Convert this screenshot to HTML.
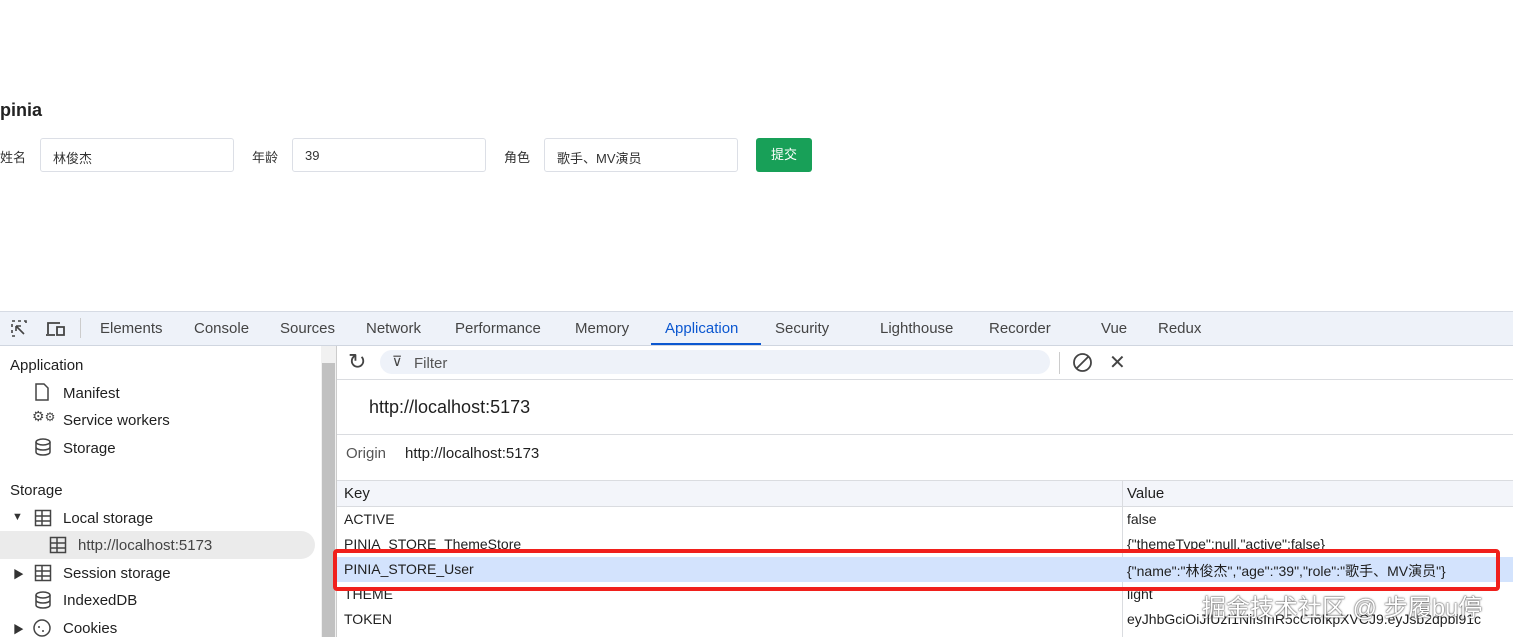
<!DOCTYPE html><html><head><meta charset="utf-8"><style>
*{box-sizing:border-box;margin:0;padding:0}
body{width:1513px;height:637px;overflow:hidden;background:#fff;font-family:"Liberation Sans","Noto Sans CJK SC",sans-serif;position:relative;color:#1f1f1f}
.a{position:absolute;white-space:nowrap}
.inp{position:absolute;border:1px solid #dcdfe6;border-radius:3px;height:34px;top:138px;font-size:13px;padding:9px 12px;color:#333}
.lbl{position:absolute;top:147px;font-size:13px;color:#333}
.tab{position:absolute;top:320px;font-size:15px;color:#444}
.sb{position:absolute;font-size:15px;color:#1f1f1f}
.row{position:absolute;left:337px;width:1176px;height:25px;font-size:14px;color:#1f1f1f}
.row span{position:absolute;top:4px}
</style></head><body>
<div class="a" style="left:0;top:100px;font-size:18px;font-weight:bold;color:#222">pinia</div>
<div class="lbl" style="left:0">姓名</div><div class="inp" style="left:40px;width:194px">林俊杰</div>
<div class="lbl" style="left:252px">年龄</div><div class="inp" style="left:292px;width:194px">39</div>
<div class="lbl" style="left:504px">角色</div><div class="inp" style="left:544px;width:194px">歌手、MV演员</div>
<div class="a" style="left:756px;top:138px;width:56px;height:34px;background:#18a058;border-radius:3px;color:#fff;font-size:13px;text-align:center;line-height:34px">提交</div>

<div class="a" style="left:0;top:311px;width:1513px;height:35px;background:#eef2f9;border-top:1px solid #d6dbe4;border-bottom:1px solid #d0d6e0"></div>
<svg class="a" style="left:10px;top:319px" width="22" height="20" viewBox="0 0 22 20"><path d="M2 2h3M8 2h3M14 2h2v2M2 5v3M2 11v3M2 17h3M6 7l8 8M6 7v5M6 7h5" stroke="#444" stroke-width="1.6" fill="none"/></svg>
<svg class="a" style="left:45px;top:319px" width="22" height="20" viewBox="0 0 22 20"><path d="M3 15V4h12M1 16h9M12 8h7v8h-7z" stroke="#444" stroke-width="1.8" fill="none"/></svg>
<div class="a" style="left:80px;top:318px;width:1px;height:20px;background:#ccc"></div>
<div class="tab" style="left:100px">Elements</div><div class="tab" style="left:194px">Console</div>
<div class="tab" style="left:280px">Sources</div><div class="tab" style="left:366px">Network</div>
<div class="tab" style="left:455px">Performance</div><div class="tab" style="left:575px">Memory</div>
<div class="tab" style="left:665px;color:#0b57d0">Application</div>
<div class="a" style="left:651px;top:343px;width:110px;height:2px;background:#0b57d0"></div>
<div class="tab" style="left:775px">Security</div><div class="tab" style="left:880px">Lighthouse</div>
<div class="tab" style="left:989px">Recorder</div><div class="tab" style="left:1101px">Vue</div><div class="tab" style="left:1158px">Redux</div>

<div class="sb" style="left:10px;top:357px">Application</div>
<svg class="a" style="left:34px;top:383px" width="16" height="18"><path d="M2 1h8l4 4v12H2z" stroke="#444" stroke-width="1.5" fill="none"/></svg>
<div class="sb" style="left:63px;top:385px">Manifest</div>
<div class="a" style="left:32px;top:408px;font-size:14px;color:#444">⚙<span style="font-size:12px">⚙</span></div>
<div class="sb" style="left:63px;top:412px">Service workers</div>
<svg class="a" style="left:34px;top:438px" width="18" height="18"><ellipse cx="9" cy="4" rx="7" ry="3" stroke="#444" stroke-width="1.5" fill="none"/><path d="M2 4v10c0 4 14 4 14 0V4M2 9c0 4 14 4 14 0" stroke="#444" stroke-width="1.5" fill="none"/></svg>
<div class="sb" style="left:63px;top:440px">Storage</div>
<div class="sb" style="left:10px;top:482px">Storage</div>
<div class="a" style="left:12px;top:511px;font-size:11px;color:#333">▼</div>
<svg class="a" style="left:34px;top:509px" width="18" height="18"><rect x="1.5" y="1.5" width="15" height="15" stroke="#444" stroke-width="1.5" fill="none"/><path d="M1 7h16M1 12h16M8 1v16" stroke="#444" stroke-width="1.5"/></svg>
<div class="sb" style="left:63px;top:510px">Local storage</div>
<div class="a" style="left:0;top:531px;width:315px;height:28px;background:#ebebeb;border-radius:0 14px 14px 0"></div>
<svg class="a" style="left:49px;top:536px" width="18" height="18"><rect x="1.5" y="1.5" width="15" height="15" stroke="#444" stroke-width="1.5" fill="none"/><path d="M1 7h16M1 12h16M8 1v16" stroke="#444" stroke-width="1.5"/></svg>
<div class="sb" style="left:78px;top:537px;color:#444">http://localhost:5173</div>
<div class="a" style="left:13px;top:566px;font-size:11px;color:#333">▶</div>
<svg class="a" style="left:34px;top:564px" width="18" height="18"><rect x="1.5" y="1.5" width="15" height="15" stroke="#444" stroke-width="1.5" fill="none"/><path d="M1 7h16M1 12h16M8 1v16" stroke="#444" stroke-width="1.5"/></svg>
<div class="sb" style="left:63px;top:565px">Session storage</div>
<svg class="a" style="left:34px;top:591px" width="18" height="18"><ellipse cx="9" cy="4" rx="7" ry="3" stroke="#444" stroke-width="1.5" fill="none"/><path d="M2 4v10c0 4 14 4 14 0V4M2 9c0 4 14 4 14 0" stroke="#444" stroke-width="1.5" fill="none"/></svg>
<div class="sb" style="left:63px;top:592px">IndexedDB</div>
<div class="a" style="left:13px;top:621px;font-size:11px;color:#333">▶</div>
<svg class="a" style="left:32px;top:618px" width="20" height="20"><circle cx="10" cy="10" r="8" stroke="#444" stroke-width="1.5" fill="none"/><circle cx="7" cy="9" r="1" fill="#444"/><circle cx="11" cy="13" r="1" fill="#444"/></svg>
<div class="sb" style="left:63px;top:620px">Cookies</div>

<div class="a" style="left:321px;top:346px;width:16px;height:291px;background:#f1f1f1"></div>
<div class="a" style="left:322px;top:363px;width:13px;height:274px;background:#c1c1c1"></div>
<div class="a" style="left:336px;top:346px;width:1px;height:291px;background:#ccc"></div>

<div class="a" style="left:337px;top:346px;width:1176px;height:34px;border-bottom:1px solid #dadce0"></div>
<div class="a" style="left:348px;top:349px;font-size:22px;color:#444">↻</div>
<div class="a" style="left:380px;top:350px;width:670px;height:24px;background:#eef2f9;border-radius:12px"></div>
<div class="a" style="left:392px;top:353px;font-size:14px;color:#444">⊽</div>
<div class="a" style="left:414px;top:355px;font-size:15px;color:#555">Filter</div>
<div class="a" style="left:1059px;top:352px;width:1px;height:22px;background:#ccc"></div>
<svg class="a" style="left:1072px;top:352px" width="21" height="21"><circle cx="10.5" cy="10.5" r="8.5" stroke="#444" stroke-width="1.8" fill="none"/><path d="M4.5 16.5l12-12" stroke="#444" stroke-width="1.8"/></svg>
<div class="a" style="left:1109px;top:350px;font-size:20px;color:#444">✕</div>
<div class="a" style="left:369px;top:397px;font-size:18px;color:#1f1f1f">http://localhost:5173</div>
<div class="a" style="left:337px;top:434px;width:1176px;height:1px;background:#dadce0"></div>
<div class="a" style="left:346px;top:445px;font-size:15px;color:#555">Origin</div>
<div class="a" style="left:405px;top:445px;font-size:15px">http://localhost:5173</div>
<div class="a" style="left:337px;top:480px;width:1176px;height:27px;background:#f3f5fa;border-top:1px solid #dadce0;border-bottom:1px solid #dadce0"></div>
<div class="a" style="left:1122px;top:480px;width:1px;height:157px;background:#dadce0"></div>
<div class="row" style="top:481px"><span style="left:7px;font-size:15px">Key</span><span style="left:790px;font-size:15px">Value</span></div>
<div class="row" style="top:507px"><span style="left:7px">ACTIVE</span><span style="left:790px">false</span></div>
<div class="row" style="top:532px"><span style="left:7px">PINIA_STORE_ThemeStore</span><span style="left:790px">{"themeType":null,"active":false}</span></div>
<div class="row" style="top:557px;background:#d3e3fd"><span style="left:7px">PINIA_STORE_User</span><span style="left:790px">{"name":"林俊杰","age":"39","role":"歌手、MV演员"}</span></div>
<div class="row" style="top:582px"><span style="left:7px">THEME</span><span style="left:790px">light</span></div>
<div class="row" style="top:607px"><span style="left:7px">TOKEN</span><span style="left:790px">eyJhbGciOiJIUzI1NiIsInR5cCI6IkpXVCJ9.eyJsb2dpbl91c</span></div>
<div class="a" style="left:333px;top:549px;width:1167px;height:42px;border:4px solid #f0201c;border-radius:4px"></div>
<div class="a" style="left:1202px;top:588px;font-size:24px;color:#fff;text-shadow:0 0 2px #555,0 0 1px #333">掘金技术社区 @ 步履bu停</div>
</body></html>
